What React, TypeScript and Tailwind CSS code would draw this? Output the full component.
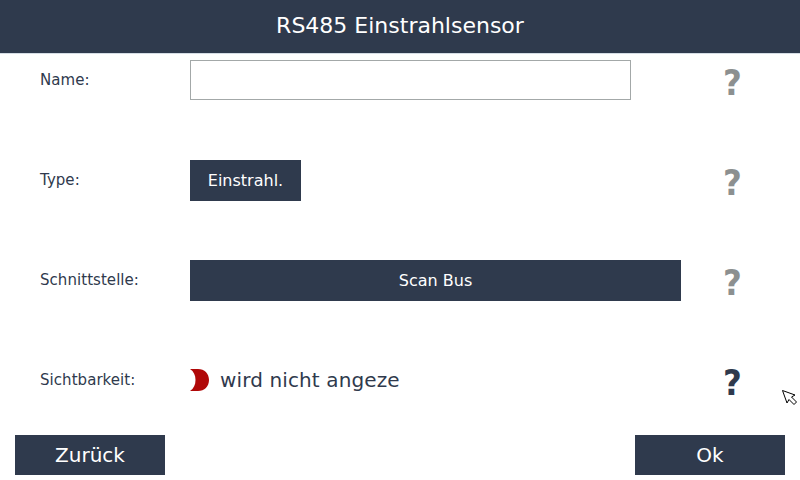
import React from "react";

const Row = ({
  label,
  help = "text-[#8c9090]",
  children,
}: {
  label: string;
  help?: string;
  children: React.ReactNode;
}) => (
  <div className="flex h-[100px] items-start pl-10">
    <div className="flex h-10 w-[150px] items-center text-[15px] tracking-[0.05px] text-[#2f3a4d]">{label}</div>
    <div className="flex w-[491px] items-start">{children}</div>
    <div className={`flex h-[46px] w-[103px] items-center justify-center text-[36px] font-bold [font-stretch:condensed] ${help}`}>?</div>
  </div>
);

const DarkButton = ({ className, children }: { className: string; children: React.ReactNode }) => (
  <button className={`flex items-center justify-center bg-[#2f3a4d] text-white ${className}`}>{children}</button>
);

const App = () => {
  return (
    <div className="relative flex h-[480px] w-[800px] flex-col overflow-hidden bg-white font-['DejaVu_Sans',sans-serif]">
      <div className="flex h-[54px] items-center justify-center border-b border-[#d5dde5] bg-[#2f3a4d] pb-0.5 text-[22px] text-white">
        RS485 Einstrahlsensor
      </div>
      <div className="flex flex-col pt-1.5">
        <Row label="Name:">
          <div className="h-10 w-[441px] border border-[#a3a8a8] bg-white" />
        </Row>
        <Row label="Type:">
          <DarkButton className="h-[41px] w-[111px] text-base">Einstrahl.</DarkButton>
        </Row>
        <Row label="Schnittstelle:">
          <DarkButton className="h-[41px] w-[491px] text-base">Scan Bus</DarkButton>
        </Row>
        <Row label="Sichtbarkeit:" help="text-[#2f3a4d]">
          <div className="flex h-10 items-center gap-[11px] text-xl tracking-[0.12px] text-[#2f3a4d]">
            <svg width="19" height="22" viewBox="0 0 19 22">
              <path d="M0 0H8C14.5 0 19 4.6 19 11S14.5 22 8 22H0C3.8 19.5 5.5 15.8 5.5 11S3.8 2.5 0 0Z" fill="#b00808" />
            </svg>
            <span>wird nicht angeze</span>
          </div>
        </Row>
      </div>
      <div className="-mt-[25px] flex justify-between px-[15px]">
        <DarkButton className="h-10 w-[150px] text-xl">Zurück</DarkButton>
        <DarkButton className="h-10 w-[150px] text-xl">Ok</DarkButton>
      </div>
      {/* mouse pointer sits over the page */}
      <svg className="absolute left-[781px] top-[389px]" width="17" height="17" viewBox="0 0 17 17">
        <path d="M1.5 1.5L6 14L8 10.5L13 15.5L15.5 13L10.5 8L14 6Z" fill="#fff" stroke="#000" strokeWidth="1" />
      </svg>
    </div>
  );
};

export default App;
